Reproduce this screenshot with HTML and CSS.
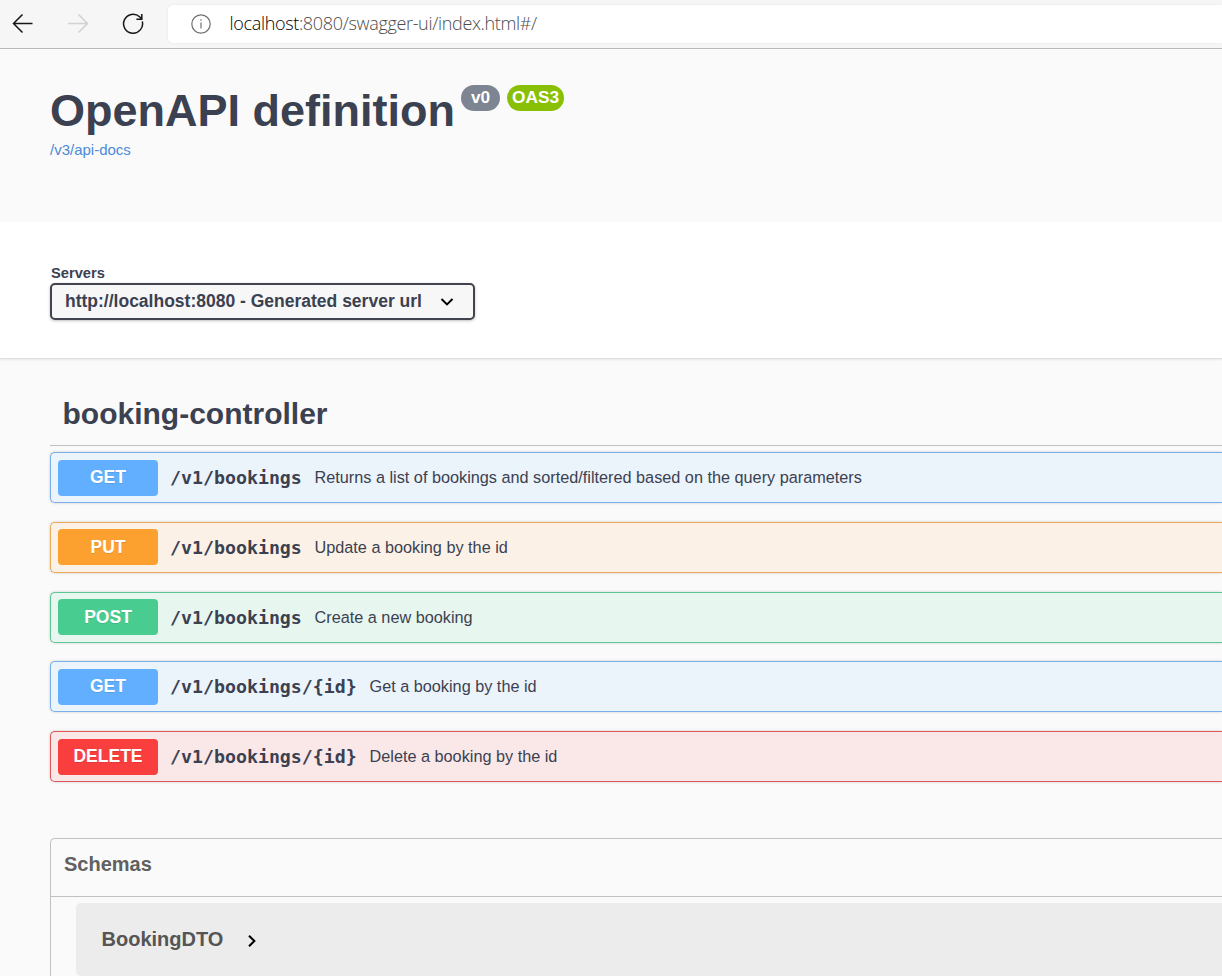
FILE: index.html
```html
<!DOCTYPE html>
<html lang="en">
<head>
<meta charset="utf-8">
<title>Swagger UI</title>
<link rel="stylesheet" href="styles.css">
</head>
<body>
<header class="toolbar">
  <nav class="nav">
    <svg class="icon" width="22" height="22" viewBox="0 0 22 22"><path d="M20.5 10.5H1.5M10.5 1.5L1.5 10.5L10.5 19.5"/></svg>
    <svg class="icon icon-off" width="22" height="22" viewBox="0 0 22 22"><path d="M1 10.5H20.5M11.5 1.5L20.5 10.5L11.5 19.5"/></svg>
    <svg class="icon" width="22" height="22" viewBox="0 0 22 22"><path d="M20.3 8.4A9.5 9.5 0 1 1 17.6 3.8L19.6 5.8M19.8 1V6.2H14.4"/></svg>
  </nav>
  <div class="address">
    <svg class="info-icon" width="20" height="20" viewBox="0 0 20 20"><circle cx="10" cy="10" r="9.2"/><path d="M10 8.5V14.5M10 5.2V6.8"/></svg>
    <span class="url"><span class="host">localhost</span>:8080/swagger-ui/index.html#/</span>
  </div>
</header>
<main>
  <section class="info">
    <div class="title-row">
      <h1 class="title">OpenAPI definition</h1>
      <span class="badge">v0</span>
      <span class="badge badge-oas">OAS3</span>
    </div>
    <a class="docs-link">/v3/api-docs</a>
  </section>
  <section class="servers">
    <span class="servers-label">Servers</span>
    <div class="select">
      <span class="select-text">http://localhost:8080 - Generated server url</span>
      <svg class="chevron" width="14" height="10" viewBox="0 0 14 10"><path d="M1.5 2L7 7.4L12.5 2"/></svg>
    </div>
  </section>
  <section class="tag">
    <h2 class="tag-title">booking-controller</h2>
    <div class="operations">
      <div class="op get"><span class="method">GET</span><span class="path">/v1/bookings</span><span class="desc">Returns a list of bookings and sorted/filtered based on the query parameters</span></div>
      <div class="op put"><span class="method">PUT</span><span class="path">/v1/bookings</span><span class="desc">Update a booking by the id</span></div>
      <div class="op post"><span class="method">POST</span><span class="path">/v1/bookings</span><span class="desc">Create a new booking</span></div>
      <div class="op get"><span class="method">GET</span><span class="path path-id">/v1/bookings/{id}</span><span class="desc">Get a booking by the id</span></div>
      <div class="op delete"><span class="method">DELETE</span><span class="path path-id">/v1/bookings/{id}</span><span class="desc">Delete a booking by the id</span></div>
    </div>
  </section>
  <section class="schemas">
    <h3 class="schemas-title">Schemas</h3>
    <div class="model">
      <span class="model-name">BookingDTO</span>
      <svg class="chevron" width="10" height="14" viewBox="0 0 10 14"><path d="M2 1.7L7.4 7L2 12.3"/></svg>
    </div>
  </section>
</main>
</body>
</html>
```
FILE: styles.css
```css
* { box-sizing: border-box; }
body {
  margin: 0;
  height: 976px;
  overflow: hidden;
  background: #fafafa;
  color: #3b4151;
  font-family: "Liberation Sans", Arial, sans-serif;
}
h1, h2, h3 { margin: 0; }
svg { flex: none; fill: none; }

.toolbar {
  display: flex;
  height: 49px;
  padding-top: 5px;
  background: #f6f6f6;
  border-bottom: 1px solid #b9bbb9;
}
.nav {
  display: flex;
  gap: 33px;
  width: 168px;
  padding: 8px 0 0 12px;
}
.icon { stroke: #161616; stroke-width: 1.5; }
.icon-off { stroke: #d2d2d2; }
.address {
  display: flex;
  align-items: center;
  flex: 1;
  height: 38px;
  padding-left: 22.5px;
  gap: 19px;
  background: #fff;
  border-radius: 5px 0 0 5px;
  box-shadow: 0 0 3px #e6e6e6;
}
.info-icon { stroke: #707070; stroke-width: 1.2; }
.url {
  margin-top: -2px;
  font: 300 18px/24px "Open Sans", "Noto Sans", sans-serif;
  letter-spacing: -0.33px;
  color: #4c4c4c;
  white-space: nowrap;
}
.host { color: #000; }

.info { height: 173px; padding: 35px 0 0 50px; }
.title-row { display: flex; align-items: flex-start; height: 57px; }
.title {
  width: 411px;
  font-size: 45px;
  line-height: 53px;
  white-space: nowrap;
}
.badge {
  width: 39px;
  height: 26px;
  margin-top: 1px;
  border-radius: 13px;
  background: #7d8492;
  color: #fff;
  font-size: 17.3px;
  font-weight: bold;
  line-height: 24px;
  text-align: center;
}
.badge-oas { width: 57px; margin-left: 7px; background: #89bf04; }
.docs-link {
  display: block;
  font-size: 15px;
  line-height: 18px;
  color: #4a8bd8;
}

.servers {
  height: 137px;
  padding: 42px 0 0 50px;
  background: #fff;
  border-bottom: 1px solid #dedede;
  box-shadow: 0 1px 2px rgba(0, 0, 0, .08);
}
.servers-label {
  display: block;
  height: 19px;
  padding-left: 1px;
  font-size: 14.7px;
  font-weight: bold;
  line-height: 18px;
}
.select {
  display: flex;
  align-items: center;
  justify-content: space-between;
  width: 425px;
  height: 37px;
  padding: 0 19px 1px 13px;
  background: #f7f7f7;
  border: 2px solid #41444e;
  border-radius: 5px;
  box-shadow: 0 1px 3px rgba(0, 0, 0, .25);
}
.select-text { font-size: 17.5px; font-weight: bold; white-space: nowrap; }
.chevron { stroke: #000; stroke-width: 2; }
.select .chevron { margin-top: 1px; }

.tag { padding: 33px 0 0 50px; }
.tag-title {
  height: 54px;
  padding-left: 12.5px;
  border-bottom: 1px solid #bfc0c4;
  font-size: 30px;
  line-height: 43px;
}
.operations {
  display: flex;
  flex-direction: column;
  gap: 18.75px;
  padding-top: 6px;
}
.op {
  display: flex;
  align-items: flex-start;
  height: 51px;
  padding: 6.5px 0 0 7px;
  border: 1px solid;
  border-right: 0;
  border-radius: 5px 0 0 5px;
  box-shadow: 0 0 3px rgba(0, 0, 0, .19);
  white-space: nowrap;
}
.method {
  width: 100px;
  height: 36px;
  border-radius: 4px;
  color: #fff;
  font-size: 17.5px;
  font-weight: bold;
  line-height: 34px;
  text-align: center;
  text-shadow: 0 1px 0 rgba(0, 0, 0, .1);
}
.path {
  width: 144.5px;
  margin-left: 12px;
  font: bold 18.25px/36px "DejaVu Sans Mono", monospace;
}
.path-id { width: 199.5px; }
.desc { font-size: 16.25px; line-height: 35px; }
.put .method, .post .method { line-height: 36px; }
.put .path, .post .path { line-height: 38px; }
.put .desc, .post .desc { line-height: 37px; }
.get { background: #ebf3fb; border-color: #7aafe9; }
.get .method { background: #61affe; }
.put { background: #fbf1e6; border-color: #eaab59; }
.put .method { background: #fca130; }
.post { background: #e8f6f0; border-color: #60c596; }
.post .method { background: #49cc90; }
.delete { background: #fae7e7; border-color: #df5759; }
.delete .method { background: #f93e3e; }

.schemas {
  height: 180px;
  margin: 56px 0 0 50px;
  border: 1px solid #c0c1c3;
  border-right: 0;
  border-radius: 5px 0 0 0;
  color: #555;
}
.schemas-title {
  height: 58px;
  padding-left: 13px;
  border-bottom: 1px solid #c0c1c3;
  font-size: 20px;
  line-height: 50px;
  color: #606060;
}
.model {
  display: flex;
  align-items: center;
  height: 73px;
  margin: 6px 0 0 25px;
  padding-left: 25.5px;
  gap: 23.5px;
  background: #ececec;
  border-radius: 5px 0 0 5px;
}
.model-name { font-size: 20px; font-weight: bold; }
.model .chevron { margin-top: 3px; }
```
